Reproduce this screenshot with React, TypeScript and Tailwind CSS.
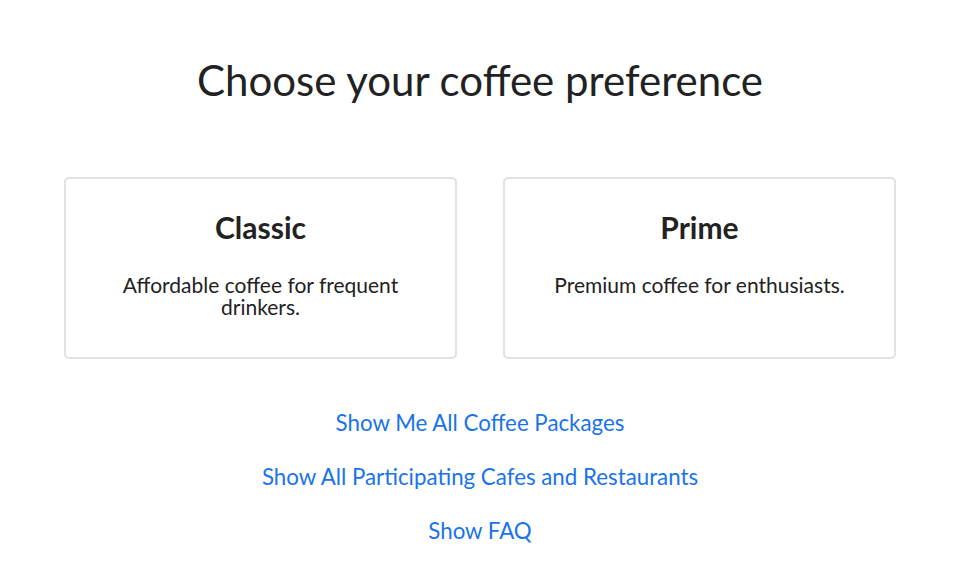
import React from 'react';

const plans = [
  { name: 'Classic', desc: 'Affordable coffee for frequent drinkers.' },
  { name: 'Prime', desc: 'Premium coffee for enthusiasts.' },
];

const links = ['Show Me All Coffee Packages', 'Show All Participating Cafes and Restaurants', 'Show FAQ'];

export default function App() {
  return (
    <div className="min-h-screen bg-white text-[#222] font-['Lato',sans-serif] pl-[64px] pr-[66px]">
      <h1 className="pt-[56px] text-center text-[42px] leading-[48px] font-normal">Choose your coffee preference</h1>
      <div className="mt-[73px] grid grid-cols-2 gap-[46px]">
        {plans.map((p) => (
          <div key={p.name} className="h-[182px] rounded-[5px] border-2 border-[#e2e2e2] px-[48px] pt-[30px] text-center">
            <h2 className="text-[30px] leading-[36px] font-bold">{p.name}</h2>
            <p className="mt-[29px] text-[21px] leading-[22px]">{p.desc}</p>
          </div>
        ))}
      </div>
      <div className="mt-[52px] flex flex-col items-center gap-[30px]">
        {links.map((l) => (
          <a key={l} href="#" className="text-[22.3px] leading-[24px] text-[#1a73e8]">
            {l}
          </a>
        ))}
      </div>
    </div>
  );
}
